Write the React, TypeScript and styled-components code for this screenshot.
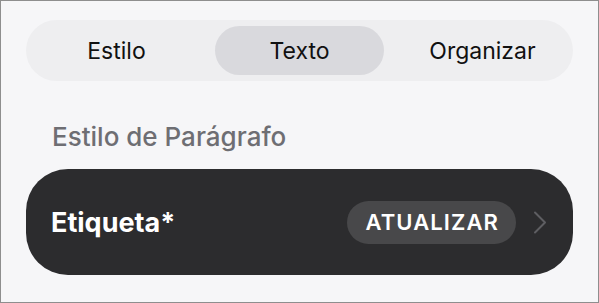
import React, { useState } from "react";
import styled, { createGlobalStyle } from "styled-components";

const GlobalStyle = createGlobalStyle`
  html, body {
    margin: 0;
    padding: 0;
    background: #f6f6f8;
  }
  body {
    font-family: Inter, "Noto Sans", "Liberation Sans", sans-serif;
    -webkit-font-smoothing: antialiased;
  }
`;

const Frame = styled.div`
  box-sizing: border-box;
  width: 599px;
  height: 303px;
  border: 1px solid #8e8e8e;
  background: #f6f6f8;
  padding: 19px 25px 0 25px;
  display: flex;
  flex-direction: column;
`;

const Segmented = styled.div`
  display: grid;
  grid-template-columns: repeat(3, 1fr);
  column-gap: 14px;
  height: 61px;
  padding: 6px;
  box-sizing: border-box;
  border-radius: 31px;
  background: #eeeef0;
`;

const Segment = styled.button<{ $active?: boolean }>`
  height: 100%;
  border: none;
  border-radius: 25px;
  background: ${(p) => (p.$active ? "#d9d9dd" : "transparent")};
  font-family: inherit;
  font-size: 23px;
  font-weight: 400;
  color: #111;
  cursor: pointer;
  padding: 0;
`;

const SectionTitle = styled.div`
  margin: 40px 0 0 26px;
  font-size: 26px;
  font-weight: 500;
  color: #6e6e73;
  line-height: 32px;
`;

const StyleCard = styled.div`
  margin-top: 16px;
  height: 106px;
  border-radius: 42px;
  background: #2c2c2e;
  display: flex;
  align-items: center;
  padding: 0 26px 0 25px;
`;

const StyleName = styled.div`
  flex: 1;
  font-size: 27px;
  font-weight: 700;
  color: #ffffff;
`;

const UpdateBadge = styled.div`
  height: 43px;
  padding: 0 17px 0 18px;
  border-radius: 22px;
  background: #48484a;
  color: #ffffff;
  font-size: 22px;
  font-weight: 600;
  letter-spacing: 1.1px;
  display: flex;
  align-items: center;
`;

const Chevron = styled.svg`
  margin-left: 17px;
  flex-shrink: 0;
`;

const tabs = ["Estilo", "Texto", "Organizar"];

export default function App() {
  const [active, setActive] = useState(1);
  return (
    <>
      <GlobalStyle />
      <Frame>
        <Segmented>
          {tabs.map((t, i) => (
            <Segment key={t} $active={i === active} onClick={() => setActive(i)}>
              {t}
            </Segment>
          ))}
        </Segmented>
        <SectionTitle>Estilo de Parágrafo</SectionTitle>
        <StyleCard>
          <StyleName>Etiqueta*</StyleName>
          <UpdateBadge>ATUALIZAR</UpdateBadge>
          <Chevron width="14" height="23" viewBox="0 0 14 23">
            <path d="M2 1.5 L12 11.5 L2 21.5" fill="none" stroke="#5e5e62" strokeWidth="2" strokeLinecap="round" strokeLinejoin="round" />
          </Chevron>
        </StyleCard>
      </Frame>
    </>
  );
}
